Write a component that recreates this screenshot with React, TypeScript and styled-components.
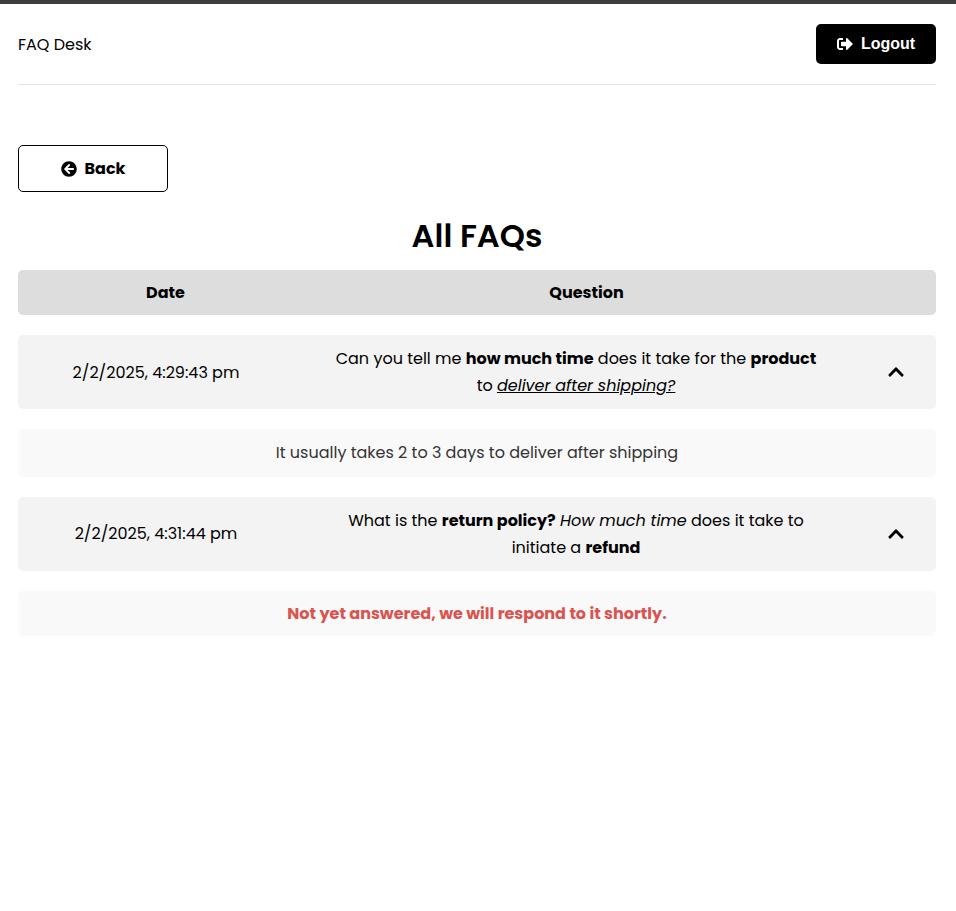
import React from 'react';
import styled, { createGlobalStyle } from 'styled-components';
import { FaArrowCircleLeft, FaChevronUp, FaSignOutAlt } from 'react-icons/fa';

const GlobalStyle = createGlobalStyle`
  *, *::before, *::after { box-sizing: border-box; }
  body {
    margin: 0;
    background: #fff;
    color: #000;
    font-family: Poppins, Inter, sans-serif;
    font-size: 16px;
    line-height: 1.7;
  }
`;

const Page = styled.div`
  min-height: 100vh;
  border-top: 4px solid #3c3c3c;
  padding: 0 20px 0 18px;
`;

const Header = styled.header`
  display: flex;
  justify-content: space-between;
  align-items: center;
  height: 81px;
  border-bottom: 1px solid #e5e5e5;
`;

const Brand = styled.span`
  padding-top: 2px;
`;

const LogoutButton = styled.button`
  display: flex;
  align-items: center;
  justify-content: center;
  gap: 8px;
  width: 120px;
  height: 40px;
  padding: 0 0 1px;
  border: 0;
  border-radius: 5px;
  background: #000;
  color: #fff;
  font: 700 16px 'Liberation Sans', sans-serif;
`;

const BackButton = styled.button`
  display: flex;
  align-items: center;
  justify-content: center;
  gap: 8px;
  width: 150px;
  height: 47px;
  margin-top: 60px;
  padding: 0;
  border: 1px solid #000;
  border-radius: 5px;
  background: #fff;
  color: #000;
  font: 700 16px Poppins, Inter, sans-serif;
`;

const Title = styled.h1`
  margin: 20px 0 10px;
  font-size: 32px;
  font-weight: 600;
  line-height: 48px;
  text-align: center;
`;

const List = styled.main`
  display: flex;
  flex-direction: column;
  gap: 20px;
`;

const TableHead = styled.div`
  display: grid;
  grid-template-columns: 275px 567px 1fr;
  align-items: center;
  height: 45px;
  padding: 0 10px;
  border-radius: 5px;
  background: #ddd;
  font-weight: 700;
  text-align: center;
`;

const Row = styled.div`
  display: grid;
  grid-template-columns: 256px 1fr 60px;
  align-items: center;
  padding: 10px;
  border-radius: 5px;
  background: #f3f3f3;
  text-align: center;
`;

const Question = styled.div`
  padding: 0 44px 0 46px;

  strong { font-weight: 700; }
`;

const Toggle = styled.button`
  display: flex;
  justify-content: center;
  padding: 0;
  border: 0;
  background: none;
  color: #000;
  font-size: 18px;
`;

const Answer = styled.div<{ $pending?: boolean }>`
  padding: ${(p) => (p.$pending ? '9px 10px' : '10px')};
  border-radius: 5px;
  background: #f9f9f9;
  color: ${(p) => (p.$pending ? '#d9534f' : '#333')};
  font-weight: ${(p) => (p.$pending ? 700 : 400)};
  text-align: center;
`;

export default function App() {
  return (
    <>
      <GlobalStyle />
      <Page>
        <Header>
          <Brand>FAQ Desk</Brand>
          <LogoutButton>
            <FaSignOutAlt />
            Logout
          </LogoutButton>
        </Header>
        <BackButton>
          <FaArrowCircleLeft />
          <span>Back</span>
        </BackButton>
        <Title>All FAQs</Title>
        <List>
          <TableHead>
            <span>Date</span>
            <span>Question</span>
          </TableHead>
          <Row>
            <span>2/2/2025, 4:29:43 pm</span>
            <Question>
              Can you tell me <strong>how much time</strong> does it take for the{' '}
              <strong>product</strong> to <em><u>deliver after shipping?</u></em>
            </Question>
            <Toggle aria-label="Collapse"><FaChevronUp /></Toggle>
          </Row>
          <Answer>It usually takes 2 to 3 days to deliver after shipping</Answer>
          <Row>
            <span>2/2/2025, 4:31:44 pm</span>
            <Question>
              What is the <strong>return policy?</strong> <em>How much time</em> does it take to
              initiate a <strong>refund</strong>
            </Question>
            <Toggle aria-label="Collapse"><FaChevronUp /></Toggle>
          </Row>
          <Answer $pending>Not yet answered, we will respond to it shortly.</Answer>
        </List>
      </Page>
    </>
  );
}
